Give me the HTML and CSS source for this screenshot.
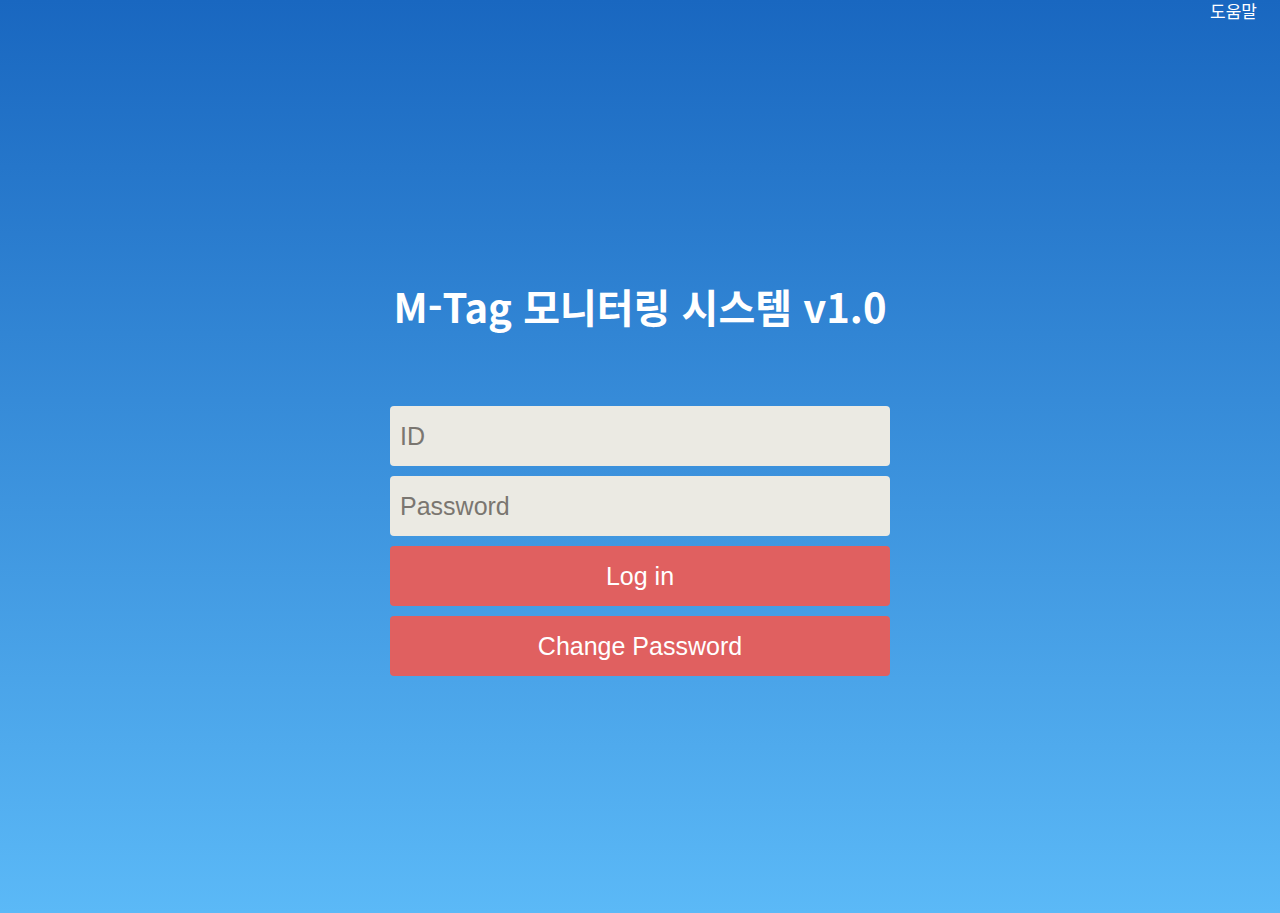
FILE: index.html
```html
<!DOCTYPE html>
<html lang="ko">
<head>
<meta charset="utf-8">
<title>M-Tag 모니터링 시스템</title>
<link rel="stylesheet" href="styles.css">
</head>
<body>
<div class="page">
  <header class="topbar">
    <a class="help" href="#">도움말</a>
  </header>
  <main class="login">
    <h1 class="title">M-Tag 모니터링 시스템 v1.0</h1>
    <form class="form">
      <input class="field" type="text" placeholder="ID">
      <input class="field" type="password" placeholder="Password">
      <button class="btn" type="button">Log in</button>
      <button class="btn" type="button">Change Password</button>
    </form>
  </main>
</div>
</body>
</html>
```
FILE: styles.css
```css
html, body {
  margin: 0;
  padding: 0;
  height: 100%;
}
body {
  background: linear-gradient(to bottom, #1967c0 0%, #5bb9f7 100%);
  font-family: "Liberation Sans", Arial, "Noto Sans CJK KR", sans-serif;
}
.page {
  height: 100%;
  display: flex;
  flex-direction: column;
}
.topbar {
  display: flex;
  justify-content: flex-end;
  padding: 0 23px 0 0;
  height: 24px;
}
.help {
  color: #ffffff;
  text-decoration: none;
  font-family: "Noto Sans CJK KR", sans-serif;
  font-size: 17px;
  line-height: 21px;
}
.login {
  display: flex;
  flex-direction: column;
  align-items: center;
  padding-top: 253px;
}
.title {
  margin: 0;
  color: #ffffff;
  font-family: "Noto Sans CJK KR", sans-serif;
  font-weight: 700;
  font-size: 40px;
  line-height: 58px;
}
.form {
  margin-top: 71px;
  width: 500px;
  display: flex;
  flex-direction: column;
  gap: 10px;
}
.field {
  box-sizing: border-box;
  height: 60px;
  border: none;
  border-radius: 4px;
  background: #ebeae3;
  padding: 0 10px;
  font-family: "Liberation Sans", Arial, sans-serif;
  font-size: 25px;
  color: #333;
  outline: none;
}
.field::placeholder {
  color: #7a7670;
}
.btn {
  height: 60px;
  border: none;
  border-radius: 4px;
  background: #e06060;
  color: #ffffff;
  font-family: "Liberation Sans", Arial, sans-serif;
  font-size: 25px;
  cursor: pointer;
}
```
